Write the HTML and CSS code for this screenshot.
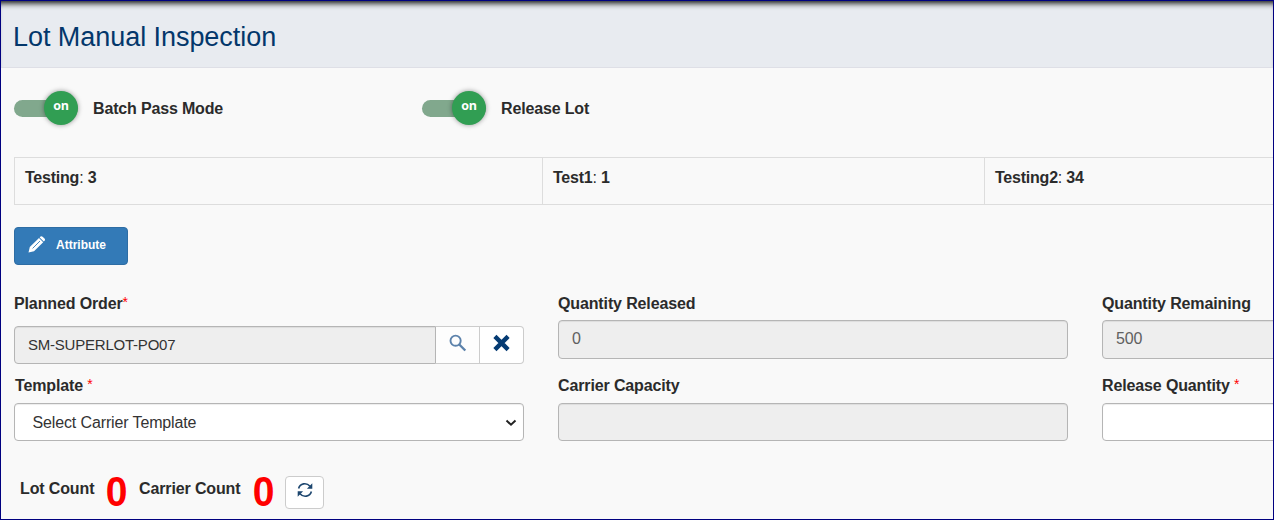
FILE: index.html
```
<!DOCTYPE html>
<html lang="en">
<head>
<meta charset="utf-8">
<title>Lot Manual Inspection</title>
<link rel="stylesheet" href="styles.css">
</head>
<body>
<div class="frame">
  <header class="page-header"><h1>Lot Manual Inspection</h1></header>
  <main class="content">
    <div class="toggles">
      <div class="toggle"><span class="switch"><span class="knob">on</span></span><span class="toggle-label">Batch Pass Mode</span></div>
      <div class="toggle"><span class="switch"><span class="knob">on</span></span><span class="toggle-label">Release Lot</span></div>
    </div>
    <div class="attributes">
      <div class="cell"><b>Testing</b>: <b>3</b></div>
      <div class="cell"><b>Test1</b>: <b>1</b></div>
      <div class="cell"><b>Testing2</b>: <b>34</b></div>
    </div>
    <button class="attribute-btn">
      <svg width="18" height="18" viewBox="0 0 18 18"><path fill="#fff" d="M.5 16.500l1.300-5.400L11 2l4.200 4.200L6 15.300zM11.700 1.400l.8-.8q1.100-.9 2.100.1l1.900 1.900q1 1.100.1 2.100l-.8.8z"/><path d="M4.600 12.400l7.400-7.400" stroke="#337ab7" stroke-width=".9"/></svg>
      <span>Attribute</span>
    </button>
    <div class="form">
      <div class="field planned">
        <label>Planned Order<i>*</i></label>
        <div class="group">
          <div class="control readonly dark">SM-SUPERLOT-PO07</div>
          <div class="addon search"><svg width="18" height="18" viewBox="0 0 18 18" fill="none" stroke="#5c82ab"><circle cx="6.600" cy="6.700" r="5.100" stroke-width="1.900"/><path d="M10.300 10.500l6 6" stroke-width="2.400"/></svg></div>
          <div class="addon"><svg width="18" height="18" viewBox="0 0 18 18"><path d="M1.900 2.400L15.100 15.600M15.100 2.400L1.900 15.600" stroke="#053b73" stroke-width="4.400"/></svg></div>
        </div>
      </div>
      <div class="field">
        <label>Quantity Released</label>
        <div class="control readonly tall">0</div>
      </div>
      <div class="field">
        <label>Quantity Remaining</label>
        <div class="control readonly tall">500</div>
      </div>
      <div class="field">
        <label class="template">Template <i>*</i></label>
        <div class="control select"><span>Select Carrier Template</span><svg width="12" height="8" viewBox="0 0 12 8"><path d="M1.500 1.500L6 5.700l4.500-4.200" fill="none" stroke="#222" stroke-width="2"/></svg></div>
      </div>
      <div class="field">
        <label>Carrier Capacity</label>
        <div class="control readonly"></div>
      </div>
      <div class="field">
        <label>Release Quantity <i>*</i></label>
        <div class="control"></div>
      </div>
    </div>
    <div class="counts">
      <span class="count-label lot">Lot Count</span><span class="count">0</span>
      <span class="count-label carrier">Carrier Count</span><span class="count">0</span>
      <button class="refresh"><svg width="16" height="16" viewBox="0 0 16 16" fill="none" stroke="#1d466f" stroke-width="1.600"><path d="M1.600 6.500C3 1.200 9.500.200 13 4.200M14.400 9.500C13 14.800 6.500 15.800 3 11.800"/><path fill="#1d466f" stroke="none" d="M15.300 1.300v5.400H9.900zM.7 14.700V9.300h5.400z"/></svg></button>
    </div>
  </main>
</div>
</body>
</html>
```
FILE: styles.css
```
* { box-sizing: border-box; }
body { margin: 0; font-family: "Liberation Sans", Arial, sans-serif; font-size: 16px; color: #2b2b2b; letter-spacing: -.13px; }
.frame { width: 1274px; height: 520px; border: 1px solid #000080; background: #f9f9f9; overflow: hidden; }
.page-header { height: 67px; padding: 0 12px; border-bottom: 1px solid #dedfe6; background: #e8ebf0; box-shadow: inset 0 7px 6px -5px #000; }
h1 { margin: 0; font-size: 27px; line-height: 73px; font-weight: 400; color: #03376b; white-space: nowrap; letter-spacing: -.05px; }
.content { padding: 23px 0 0 13px; }
.toggles { display: flex; height: 34px; }
.toggle { display: flex; width: 408px; align-items: center; }
.switch { display: flex; justify-content: flex-end; align-items: center; width: 64px; height: 17px; border-radius: 9px; background: #81a88d; }
.knob { width: 34px; height: 34px; border-radius: 50%; background: #319e53; box-shadow: 0 0 5px rgba(0,0,0,.4); color: #fff; font: 700 12.5px/29px "Open Sans", sans-serif; text-align: center; }
.toggle-label { margin-left: 15px; padding-top: 2px; font-weight: 700; letter-spacing: -.16px; }
.attributes { display: grid; grid-template-columns: 527px 442px 529px; height: 48px; margin-top: 32px; border: 1px solid #ddd; border-right: 0; width: 1499px; }
.cell { padding: 11px 10px; line-height: 18px; border-left: 1px solid #ddd; letter-spacing: -.22px; }
.cell:first-child { border-left: 0; }
.attribute-btn { display: flex; align-items: center; width: 114px; height: 38px; margin-top: 22px; padding: 0 0 2px 13px; border: 1px solid #2e6da4; border-radius: 4px; background: #337ab7; color: #fff; font: 700 12px "Liberation Sans", sans-serif; gap: 10px; }
.form { display: grid; grid-template-columns: repeat(3, 510px); column-gap: 34px; margin-top: 28px; grid-template-rows: 82px 66px; }
label { display: block; height: 27px; line-height: 21px; font-weight: 700; white-space: nowrap; }
label i { font-style: normal; font-weight: 400; font-size: 14px; line-height: 1; vertical-align: 2px; color: #f00; }
.template { padding-left: 1px; }
.planned label { height: 33px; }
.form .field:nth-child(n+4) label { height: 28px; }
.control { height: 38px; padding: 0 13px; line-height: 36px; border: 1px solid #b5b5b5; border-radius: 4px; background: #fff; box-shadow: inset 0 1px 1px rgba(0,0,0,.075); color: #333; }
.readonly { background: #eee; color: #606060; }
.tall { height: 39px; line-height: 35px; }
.dark { color: #333; }
.group { display: flex; height: 38px; }
.group .control { width: 422px; border-radius: 4px 0 0 4px; font-size: 15px; letter-spacing: -.22px; }
.addon { display: flex; align-items: center; justify-content: center; width: 44px; padding-bottom: 4px; border: 1px solid #ccc; border-left: 0; background: #fff; }
.addon.search { background: #fdfdfd; }
.addon:last-child { border-radius: 0 4px 4px 0; }
.select { display: flex; justify-content: space-between; align-items: center; padding: 1px 6px 0 17.5px; }
.counts { display: flex; height: 34px; margin-top: 35px; }
.count-label { font-weight: 700; line-height: 26px; white-space: nowrap; }
.lot { width: 91px; padding-left: 6px; }
.carrier { width: 112px; margin-left: 11px; }
.count { width: 23px; color: #f00; font-size: 42px; line-height: 31px; font-weight: 700; letter-spacing: 0; transform: scaleX(.93); }
.carrier + .count { margin-left: 1px; }
.refresh { width: 39px; height: 33px; margin-left: 10px; padding: 0 0 5px; border: 1px solid #ccc; border-radius: 4px; background: #fff; display: flex; align-items: center; justify-content: center; }
```
